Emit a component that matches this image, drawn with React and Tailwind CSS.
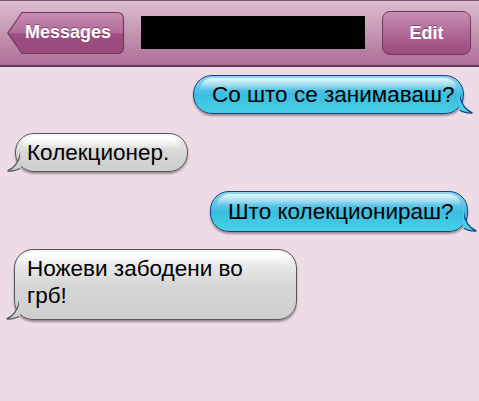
import React from 'react';

const font = { fontFamily: '"Liberation Sans", Arial, sans-serif' };

function BackButton() {
  return (
    <div className="relative h-[44px] w-[118px] shrink-0">
      <svg className="absolute inset-0" width="118" height="44" viewBox="0 0 118 44">
        <defs>
          <linearGradient id="bk" x1="0" y1="0" x2="0" y2="1">
            <stop offset="0" stopColor="#c98fb3" />
            <stop offset="0.5" stopColor="#b06a96" />
            <stop offset="0.52" stopColor="#9e4d80" />
            <stop offset="1" stopColor="#9a4a7c" />
          </linearGradient>
        </defs>
        <path d="M0.8 22 L15 1.5 L110 1.5 Q116.5 1.5 116.5 8 L116.5 36 Q116.5 42.5 110 42.5 L15 42.5 Z" fill="url(#bk)" stroke="#6e3a5c" strokeWidth="1.2" />
      </svg>
      <span className="absolute left-[18px] top-[12px] text-[18px] font-bold text-white leading-none" style={{ textShadow: '0 -1px 0 rgba(80,20,60,0.5)' }}>Messages</span>
    </div>
  );
}

function Bubble({ side, children, className }) {
  const blue = side === 'right';
  return (
    <div className={'relative ' + className}>
      <div
        className={
          'relative rounded-[19px] border-[1.5px] text-[22.5px] leading-[27px] text-black ' +
          (blue
            ? 'border-[#1b3c86] bg-gradient-to-b from-[#8fd6ef] via-[#3bbde0] to-[#46d0e6] shadow-[0_2px_2px_rgba(0,0,0,0.35)]'
            : 'border-[#555] bg-gradient-to-b from-[#fafafa] via-[#d6d6d6] to-[#cfcfcf] shadow-[0_2px_2px_rgba(0,0,0,0.35)]')
        }
      >
        <div
          className={
            'pointer-events-none absolute left-[6px] right-[6px] top-[2px] h-[12px] rounded-t-[14px] ' +
            (blue ? 'bg-gradient-to-b from-[#e2f5fb] to-[#a6dff0]/0' : 'bg-gradient-to-b from-white to-white/0')
          }
        />
        <div className="relative">{children}</div>
      </div>
      {blue ? (
        <svg className="absolute right-[-9px] bottom-[0px]" width="14" height="22" viewBox="0 0 14 22">
          <path d="M0 0 Q2 16 13.5 21 Q3 21.5 -2 16 Z" fill="#46cfe6" stroke="#1b3c86" strokeWidth="1.2" />
          <path d="M-1 0 L1 0 L1 19 L-3 19 Z" fill="#46cfe6" />
        </svg>
      ) : (
        <svg className="absolute left-[-8px] bottom-[0px]" width="14" height="22" viewBox="0 0 14 22">
          <path d="M14 0 Q12 16 0.5 21 Q11 21.5 16 16 Z" fill="#cfcfcf" stroke="#555" strokeWidth="1.2" />
          <path d="M15 0 L13 0 L13 19 L17 19 Z" fill="#cfcfcf" />
        </svg>
      )}
    </div>
  );
}

export default function App() {
  return (
    <div className="h-[401px] w-[479px] overflow-hidden bg-[#eddbe6]" style={font}>
      <div className="flex h-[67px] items-center border-t border-b-2 border-t-[#7a5a70] border-b-[#5b3c52] bg-gradient-to-b from-[#dbbdd0] via-[#c595b3] to-[#ad6f96] pl-[7px] pr-[8px]">
        <BackButton />
        <div className="ml-[16px] mt-[-1px] h-[33px] w-[224px] bg-black" />
        <div className="ml-auto flex h-[44px] w-[89px] items-center justify-center rounded-[8px] border-[1.2px] border-[#6e3a5c] bg-gradient-to-b from-[#c98fb3] via-[#b06a96] to-[#9a4a7c] text-[18px] font-bold text-white" style={{ textShadow: '0 -1px 0 rgba(80,20,60,0.5)' }}>
          Edit
        </div>
      </div>
      <div className="flex flex-col">
        <Bubble side="right" className="ml-[193px] mt-[8px] w-[271px]">
          <div className="pl-[18px] py-[5px]">Со што се занимаваш?</div>
        </Bubble>
        <Bubble side="left" className="ml-[15px] mt-[19px] w-[173px]">
          <div className="pl-[11px] py-[5px]">Колекционер.</div>
        </Bubble>
        <Bubble side="right" className="ml-[210px] mt-[19px] w-[258px]">
          <div className="pl-[17px] py-[6px]">Што колекционираш?</div>
        </Bubble>
        <Bubble side="left" className="ml-[14px] mt-[17px] w-[283px]">
          <div className="pl-[12px] pr-[20px] pt-[5px] pb-[10px]">Ножеви забодени во грб!</div>
        </Bubble>
      </div>
    </div>
  );
}
